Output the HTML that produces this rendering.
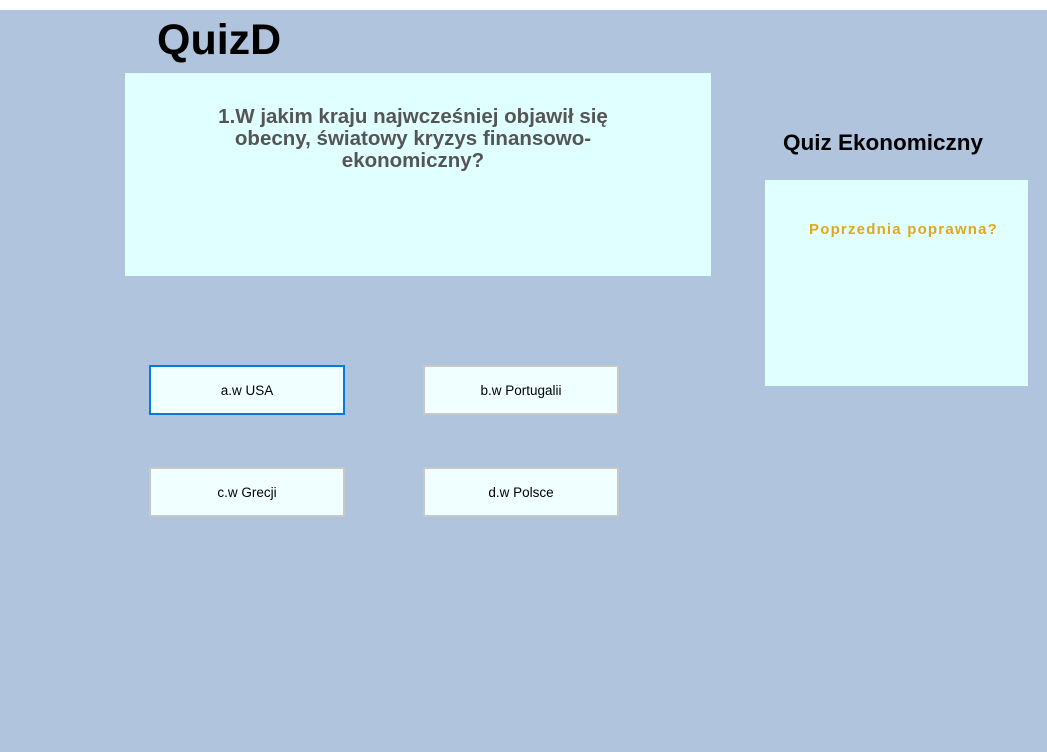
<!DOCTYPE html>
<html><head><meta charset="utf-8"><style>
html,body{margin:0;padding:0;}
body{width:1047px;height:752px;background:#fff;position:relative;overflow:hidden;font-family:"Liberation Sans",Arial,sans-serif;}
.bg{position:absolute;left:0;top:10px;width:1047px;height:742px;background:#B0C4DE;}
.abs{position:absolute;}
.title{left:157px;top:16px;font-size:43px;font-weight:bold;color:#000;}
.q{left:125px;top:73px;width:586px;height:203px;background:#E0FFFF;}
.qt{left:183px;top:106px;width:460px;text-align:center;font-size:20.5px;font-weight:bold;color:#555;line-height:22px;}
.h2{left:783px;top:130px;font-size:22.5px;font-weight:bold;color:#000;}
.rp{left:765px;top:180px;width:263px;height:206px;background:#E0FFFF;}
.pp{left:809px;top:221px;font-size:15px;font-weight:bold;color:#E0A81C;letter-spacing:1.2px;}
.btn{width:192px;height:46px;background:#F0FFFF;border:2px solid #C8C8C8;display:flex;align-items:center;justify-content:center;font-size:13.5px;color:#000;}
.sel{border-color:#0A78D7;}
</style></head><body>
<div class="bg"></div>
<div class="abs title">QuizD</div>
<div class="abs q"></div>
<div class="abs qt">1.W jakim kraju najwcześniej objawił się<br>obecny, światowy kryzys finansowo-<br>ekonomiczny?</div>
<div class="abs h2">Quiz Ekonomiczny</div>
<div class="abs rp"></div>
<div class="abs pp">Poprzednia poprawna?</div>
<div class="abs btn sel" style="left:149px;top:365px">a.w USA</div>
<div class="abs btn" style="left:423px;top:365px">b.w Portugalii</div>
<div class="abs btn" style="left:149px;top:467px">c.w Grecji</div>
<div class="abs btn" style="left:423px;top:467px">d.w Polsce</div>
</body></html>
